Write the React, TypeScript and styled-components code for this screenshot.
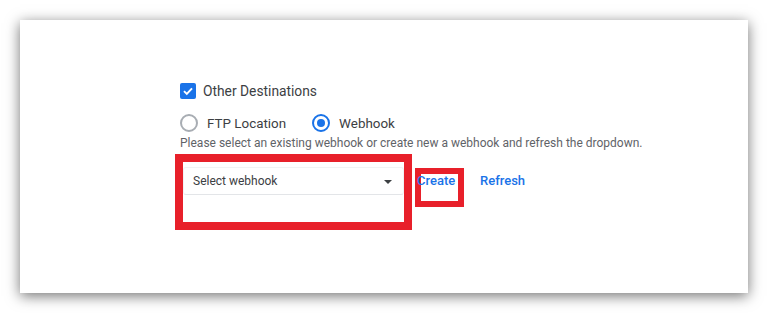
import React, { useState } from 'react'
import styled, { createGlobalStyle } from 'styled-components'

const Global = createGlobalStyle`
  html, body {
    margin: 0;
    padding: 0;
    background: #ffffff;
  }
  body {
    font-family: Roboto, "Liberation Sans", Arial, sans-serif;
    color: #3c4043;
  }
`

const Card = styled.div`
  box-sizing: border-box;
  margin: 20px;
  width: 728px;
  height: 273px;
  background: #fff;
  /* the screenshot has a soft grey drop shadow round the panel */
  box-shadow: 0 3px 13px rgba(0, 0, 0, 0.55);
  padding: 59px 0 0 160px;
`

const CheckRow = styled.label`
  display: flex;
  align-items: center;
  height: 24px;
  gap: 7px;
  font-size: 13.8px;
  color: #3c4043;
`

const CheckBox = styled.span`
  width: 16px;
  height: 16px;
  border-radius: 2px;
  background: #1a73e8;
  display: flex;
  align-items: center;
  justify-content: center;
`

const RadioRow = styled.div`
  display: flex;
  align-items: center;
  height: 24px;
  margin-top: 8px;
`

const RadioOption = styled.label`
  display: flex;
  align-items: center;
  gap: 9px;
  font-size: 13.4px;
  color: #3c4043;
  margin-right: 26px;
  cursor: pointer;
`

const RadioCircle = styled.span<{ $on: boolean }>`
  box-sizing: border-box;
  width: 18px;
  height: 18px;
  border-radius: 50%;
  border: 2px solid ${p => (p.$on ? '#1a73e8' : '#a8adb3')};
  display: flex;
  align-items: center;
  justify-content: center;
  &::after {
    content: '';
    width: 8px;
    height: 8px;
    border-radius: 50%;
    background: ${p => (p.$on ? '#1a73e8' : 'transparent')};
  }
`

const Help = styled.div`
  font-size: 12px;
  line-height: 16px;
  color: #5f6368;
`

const SelectRow = styled.div`
  display: flex;
  align-items: flex-start;
  margin-top: 3px;
`

// red annotation frames drawn on the screenshot
const Highlight = styled.div<{ $w: number; $h: number; $t: number }>`
  box-sizing: border-box;
  width: ${p => p.$w}px;
  height: ${p => p.$h}px;
  border: ${p => p.$t}px solid #e8202a;
`

const SelectFrame = styled(Highlight)`
  margin-left: -5px;
  padding-top: 5px;
`

const CreateFrame = styled(Highlight)`
  margin-left: 3px;
  margin-top: 14px;
`

const SelectField = styled.div`
  box-sizing: border-box;
  height: 28px;
  border: 1px solid #f1f3f4;
  border-bottom-color: #e3e5e8;
  border-radius: 3px;
  display: flex;
  align-items: center;
  justify-content: space-between;
  padding: 0 11px 0 9px;
  font-size: 12px;
  color: #3c4043;
`

const Caret = styled.span`
  width: 0;
  height: 0;
  border-left: 4px solid transparent;
  border-right: 4px solid transparent;
  border-top: 4px solid #3c4043;
  margin-top: 2px;
`

const Link = styled.a<{ $pull?: number }>`
  display: block;
  position: relative;
  font-size: 13px;
  line-height: 13px;
  font-weight: 500;
  color: #1a73e8;
  text-decoration: none;
  margin-left: ${p => p.$pull ?? 0}px;
  cursor: pointer;
`

const RefreshLink = styled(Link)`
  margin-left: 16px;
  margin-top: 20px;
`

const App = () => {
  const [dest, setDest] = useState<'ftp' | 'webhook'>('webhook')

  return (
    <>
      <Global />
      <Card>
        <CheckRow>
          <CheckBox>
            <svg width="12" height="12" viewBox="0 0 12 12">
              <path d="M2 6.2 L4.8 9 L10 3.4" fill="none" stroke="#fff" strokeWidth="1.9" />
            </svg>
          </CheckBox>
          Other Destinations
        </CheckRow>
        <RadioRow>
          <RadioOption onClick={() => setDest('ftp')}>
            <RadioCircle $on={dest === 'ftp'} />
            FTP Location
          </RadioOption>
          <RadioOption onClick={() => setDest('webhook')}>
            <RadioCircle $on={dest === 'webhook'} />
            Webhook
          </RadioOption>
        </RadioRow>
        <Help>Please select an existing webhook or create new a webhook and refresh the dropdown.</Help>
        <SelectRow>
          <SelectFrame $w={237} $h={76} $t={8}>
            <SelectField>
              Select webhook
              <Caret />
            </SelectField>
          </SelectFrame>
          <CreateFrame $w={49} $h={39} $t={6}>
            <Link $pull={-4}>Create</Link>
          </CreateFrame>
          <RefreshLink>Refresh</RefreshLink>
        </SelectRow>
      </Card>
    </>
  )
}

export default App
